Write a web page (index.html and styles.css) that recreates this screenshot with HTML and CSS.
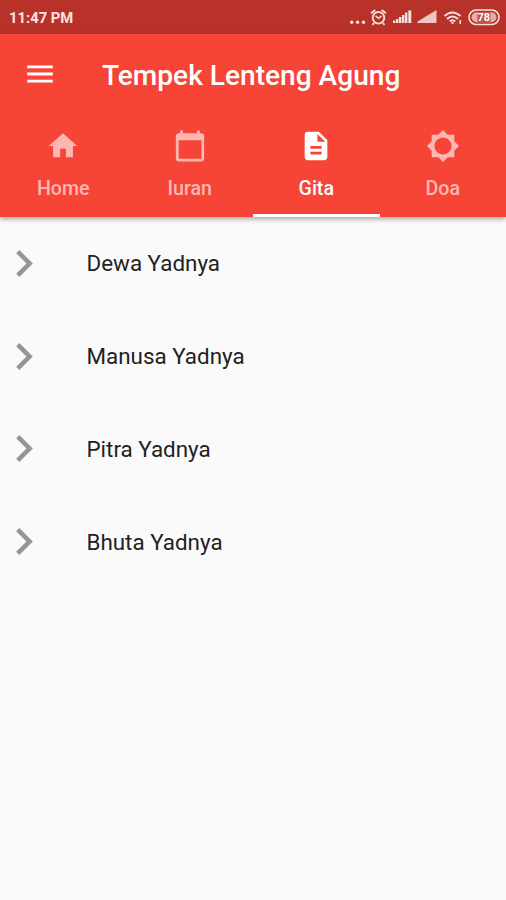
FILE: index.html
```html
<!DOCTYPE html>
<html lang="id">
<head>
<meta charset="utf-8">
<title>Tempek Lenteng Agung</title>
<link rel="stylesheet" href="styles.css">
</head>
<body>
<div class="status">
  <span class="time">11:47 PM</span>
  <svg class="indicators" viewBox="0 0 156 34" width="156" height="34">
    <g fill="#fff" opacity=".85">
      <circle cx="1.700" cy="22.300" r="1.700"/><circle cx="7.600" cy="22.300" r="1.700"/><circle cx="13.500" cy="22.300" r="1.700"/>
      <path d="M43 20.500h2.400V23H43zM46 19h2.400v4H46zM49 17h2.400v6H49zM52 15h2.400v8H52zM55 12.500h2.400V23H55zM58.300 10.500h3V23h-3z"/>
      <path d="M67.500 23V21.500L86.500 10v13z" opacity=".85"/>
      <path d="M109.500 20h1.500v4h-1.500z"/>
    </g>
    <g fill="none" stroke="#fff" opacity=".85">
      <circle cx="28.500" cy="17.800" r="5.800" stroke-width="1.900"/>
      <path d="M21 13.200l4.300-3.200M31.700 10l4.300 3.200M24 23l-1.500 1.800M33 23l1.500 1.800" stroke-width="1.800"/>
      <path d="M25.500 15.800l3 2.500 3-2.500" stroke-width="1.500"/>
      <path d="M94.500 16q8-7 16 0M97 19q5.500-5 11 0M99.800 21.500q2.700-2.500 5.400 0" stroke-width="2"/>
      <path d="M101.500 23h2" stroke-width="2"/>
    </g>
    <rect x="119" y="10" width="30" height="14.500" rx="7.250" fill="none" stroke="#fff" stroke-width="1.600" opacity=".85"/>
    <rect x="121.500" y="12.300" width="25" height="10" rx="5" fill="#fff" opacity=".6"/>
    <rect x="127.500" y="12" width="13" height="10.500" fill="#c4524a"/>
    <text class="level" x="133.800" y="21.300" text-anchor="middle">78</text>
  </svg>
</div>
<header class="appbar">
  <div class="toolbar">
    <svg class="icon" viewBox="0 0 24 24"><path d="M3 18h18v-2H3v2zm0-5h18v-2H3v2zm0-7v2h18V6H3z"/></svg>
    <h1>Tempek Lenteng Agung</h1>
  </div>
  <nav class="tabs">
    <div class="tab">
      <svg class="icon" viewBox="0 0 24 24"><path d="M10 20v-6h4v6h5v-8h3L12 3 2 12h3v8z"/></svg>
      <span>Home</span>
    </div>
    <div class="tab">
      <svg class="icon" viewBox="0 0 24 24"><path d="M20 3h-1V1h-2v2H7V1H5v2H4c-1.100 0-2 .9-2 2v16c0 1.100.9 2 2 2h16c1.100 0 2-.9 2-2V5c0-1.100-.9-2-2-2zm0 18H4V8h16v13z"/></svg>
      <span>Iuran</span>
    </div>
    <div class="tab active">
      <svg class="icon" viewBox="0 0 24 24"><path d="M14 2H6c-1.100 0-1.990.9-1.990 2L4 20c0 1.100.89 2 1.990 2H18c1.100 0 2-.9 2-2V8l-6-6zm2 16H8v-2h8v2zm0-4H8v-2h8v2zm-3-5V3.500L18.500 9H13z"/></svg>
      <span>Gita</span>
    </div>
    <div class="tab">
      <svg class="icon" viewBox="0 0 24 24"><path d="M20 15.310L23.310 12 20 8.690V4h-4.690L12 .69 8.690 4H4v4.690L.69 12 4 15.310V20h4.690L12 23.310 15.310 20H20v-4.690zM12 18c-3.310 0-6-2.690-6-6s2.690-6 6-6 6 2.690 6 6-2.690 6-6 6z"/></svg>
      <span>Doa</span>
    </div>
  </nav>
</header>
<ul class="list">
  <li><svg class="chevron" viewBox="8.590 6 7.410 12"><path d="M10 6L8.590 7.410 13.170 12l-4.580 4.590L10 18l6-6z"/></svg><span>Dewa Yadnya</span></li>
  <li><svg class="chevron" viewBox="8.590 6 7.410 12"><path d="M10 6L8.590 7.410 13.170 12l-4.580 4.590L10 18l6-6z"/></svg><span>Manusa Yadnya</span></li>
  <li><svg class="chevron" viewBox="8.590 6 7.410 12"><path d="M10 6L8.590 7.410 13.170 12l-4.580 4.590L10 18l6-6z"/></svg><span>Pitra Yadnya</span></li>
  <li><svg class="chevron" viewBox="8.590 6 7.410 12"><path d="M10 6L8.590 7.410 13.170 12l-4.580 4.590L10 18l6-6z"/></svg><span>Bhuta Yadnya</span></li>
</ul>
</body>
</html>
```
FILE: styles.css
```css
* { box-sizing: border-box; }
body {
  margin: 0;
  height: 900px;
  background: #fafafa;
  font-family: Roboto, "Liberation Sans", sans-serif;
  overflow: hidden;
}
.status {
  height: 34px;
  background: #b83229;
  display: flex;
  align-items: center;
  justify-content: space-between;
  padding-left: 9px;
}
.time {
  color: #fbe3e1;
  font-size: 14.8px;
  font-weight: 700;
  line-height: 34px;
  padding-top: 1px;
}
.level { font-size: 11px; font-weight: 700; fill: #fff; }
.appbar {
  height: 183px;
  background: #f64436;
  color: #fff;
  box-shadow: 0 2px 5px rgba(0, 0, 0, .35);
}
.toolbar {
  height: 79px;
  display: flex;
  align-items: center;
  padding-left: 23px;
  gap: 45px;
}
.icon { display: block; width: 34px; height: 34px; fill: currentColor; }
h1 {
  margin: 4px 0 0;
  font-size: 28.1px;
  font-weight: 500;
  line-height: 34px;
  white-space: nowrap;
}
.tabs { display: grid; grid-template-columns: repeat(4, 1fr); height: 104px; }
.tab {
  display: flex;
  flex-direction: column;
  align-items: center;
  gap: 14px;
  padding-top: 15.5px;
  color: #fcb7b2;
  font-size: 19.6px;
  font-weight: 500;
  line-height: 24px;
  border-bottom: 3px solid transparent;
}
.tab.active { color: #fff; border-bottom-color: #fff; }
.list { list-style: none; margin: 0; padding: 0; }
.list li {
  height: 92.8px;
  display: flex;
  align-items: center;
  padding-left: 15.8px;
  gap: 53.7px;
  font-size: 22.4px;
  color: #222;
}
.chevron { width: 17px; height: 27px; fill: #959595; }
```
